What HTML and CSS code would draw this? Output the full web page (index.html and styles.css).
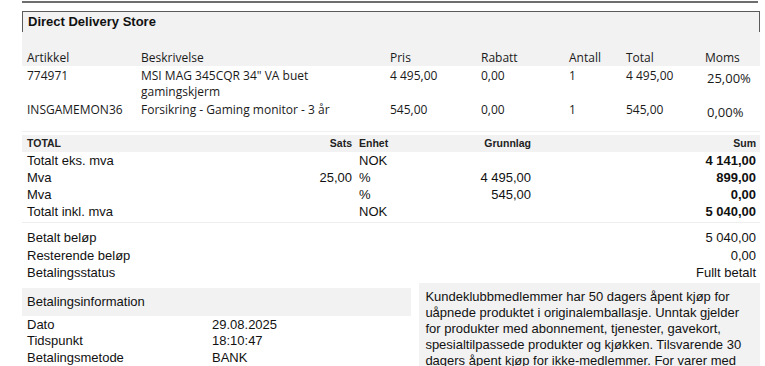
FILE: index.html
```html
<!DOCTYPE html>
<html lang="no">
<head>
<meta charset="utf-8">
<title>Direct Delivery Store</title>
<link rel="stylesheet" href="styles.css">
</head>
<body>
<div class="page">
  <div class="topline"></div>
  <div class="store-title">Direct Delivery Store</div>

  <div class="items">
    <div class="irow ihead">
      <div>Artikkel</div><div>Beskrivelse</div><div>Pris</div><div>Rabatt</div><div>Antall</div><div>Total</div><div>Moms</div>
    </div>
    <div class="irow">
      <div>774971</div><div>MSI MAG 345CQR 34" VA buet gamingskjerm</div><div>4 495,00</div><div>0,00</div><div>1</div><div>4 495,00</div><div class="moms">25,00%</div>
    </div>
    <div class="irow">
      <div>INSGAMEMON36</div><div>Forsikring - Gaming monitor - 3 år</div><div>545,00</div><div>0,00</div><div>1</div><div>545,00</div><div class="moms">0,00%</div>
    </div>
  </div>

  <div class="totals">
    <div class="trow thead">
      <div>TOTAL</div><div class="r">Sats</div><div class="unit">Enhet</div><div class="r">Grunnlag</div><div class="r">Sum</div>
    </div>
    <div class="tbody">
      <div class="trow"><div>Totalt eks. mva</div><div class="r"></div><div class="unit">NOK</div><div class="r"></div><div class="r b">4 141,00</div></div>
      <div class="trow"><div>Mva</div><div class="r">25,00</div><div class="unit">%</div><div class="r">4 495,00</div><div class="r b">899,00</div></div>
      <div class="trow"><div>Mva</div><div class="r"></div><div class="unit">%</div><div class="r">545,00</div><div class="r b">0,00</div></div>
      <div class="trow"><div>Totalt inkl. mva</div><div class="r"></div><div class="unit">NOK</div><div class="r"></div><div class="r b">5 040,00</div></div>
    </div>
  </div>

  <div class="paid">
    <div class="prow"><span>Betalt beløp</span><span>5 040,00</span></div>
    <div class="prow"><span>Resterende beløp</span><span>0,00</span></div>
    <div class="prow"><span>Betalingsstatus</span><span>Fullt betalt</span></div>
  </div>

  <div class="bottom">
    <div class="payinfo">
      <div class="payhead">Betalingsinformation</div>
      <div class="payrow"><span>Dato</span><span>29.08.2025</span></div>
      <div class="payrow"><span>Tidspunkt</span><span>18:10:47</span></div>
      <div class="payrow"><span>Betalingsmetode</span><span>BANK</span></div>
    </div>
    <div class="terms">Kundeklubbmedlemmer har 50 dagers åpent kjøp for uåpnede produktet i originalemballasje. Unntak gjelder for produkter med abonnement, tjenester, gavekort, spesialtilpassede produkter og kjøkken. Tilsvarende 30 dagers åpent kjøp for ikke-medlemmer. For varer med</div>
  </div>
</div>
</body>
</html>
```

FILE: styles.css
```css
html, body {
  margin: 0;
  padding: 0;
  background: #ffffff;
}
html {
  height: 366px;
  overflow: hidden;
}
body {
  font-family: "Liberation Sans", Arial, sans-serif;
  font-size: 13px;
  color: #111;
}
.page {
  width: 738px;
  margin-left: 22px;
}
.topline {
  margin-top: 1px;
  width: 736px;
  height: 2px;
  background: #6e6e6e;
}
.store-title {
  margin-top: 8px;
  height: 20px;
  line-height: 19px;
  padding-left: 5px;
  background: #f2f2f2;
  border: 1px solid #5a5a5a;
  border-bottom: none;
  font-weight: bold;
  font-size: 13px;
}
.items {
  font-family: "Open Sans", "Noto Sans", sans-serif;
  font-size: 12px;
  color: #1a1a1a;
  border-bottom: 1px solid #f0f0f0;
  padding-bottom: 11px;
}
.irow {
  display: grid;
  grid-template-columns: 114px 249px 91px 88px 57px 79px 1fr;
  padding-left: 5px;
  line-height: 16px;
}
.irow + .irow {
  margin-top: 2px;
}
.ihead {
  background: #f2f2f2;
  padding-top: 18px;
  height: 16px;
  margin-bottom: 1px;
}
.irow .moms {
  font-size: 13px;
  padding-left: 2px;
  padding-top: 2px;
}
.totals {
  margin-top: 3px;
}
.trow {
  display: grid;
  grid-template-columns: 250px 75px 60px 119px 225px;
  padding-left: 5px;
  height: 17px;
  line-height: 17px;
}
.trow .r {
  text-align: right;
}
.trow .unit {
  padding-left: 7px;
}
.trow .b {
  font-weight: bold;
}
.thead {
  background: #f2f2f2;
  height: 17px;
  line-height: 17px;
  font-size: 10.5px;
  font-weight: bold;
  color: #222;
}
.tbody {
  padding-bottom: 2px;
  border-bottom: 1px solid #eeeeee;
}
.paid {
  padding: 6px 4px 0 5px;
}
.prow {
  display: flex;
  justify-content: space-between;
  height: 17.5px;
  line-height: 17.5px;
}
.bottom {
  display: flex;
  align-items: flex-start;
  margin-top: 1px;
}
.payinfo {
  width: 391px;
  margin-top: 5px;
}
.payhead {
  background: #f2f2f2;
  height: 28px;
  line-height: 28px;
  padding-left: 5px;
  margin-bottom: 1px;
}
.payrow {
  display: grid;
  grid-template-columns: 185px 1fr;
  padding-left: 5px;
  height: 16.5px;
  line-height: 16.5px;
}
.terms {
  margin-left: 8px;
  width: 330px;
  padding: 6px;
  background: #f2f2f2;
  line-height: 16px;
  font-size: 13px;
  height: 84px;
}
```
